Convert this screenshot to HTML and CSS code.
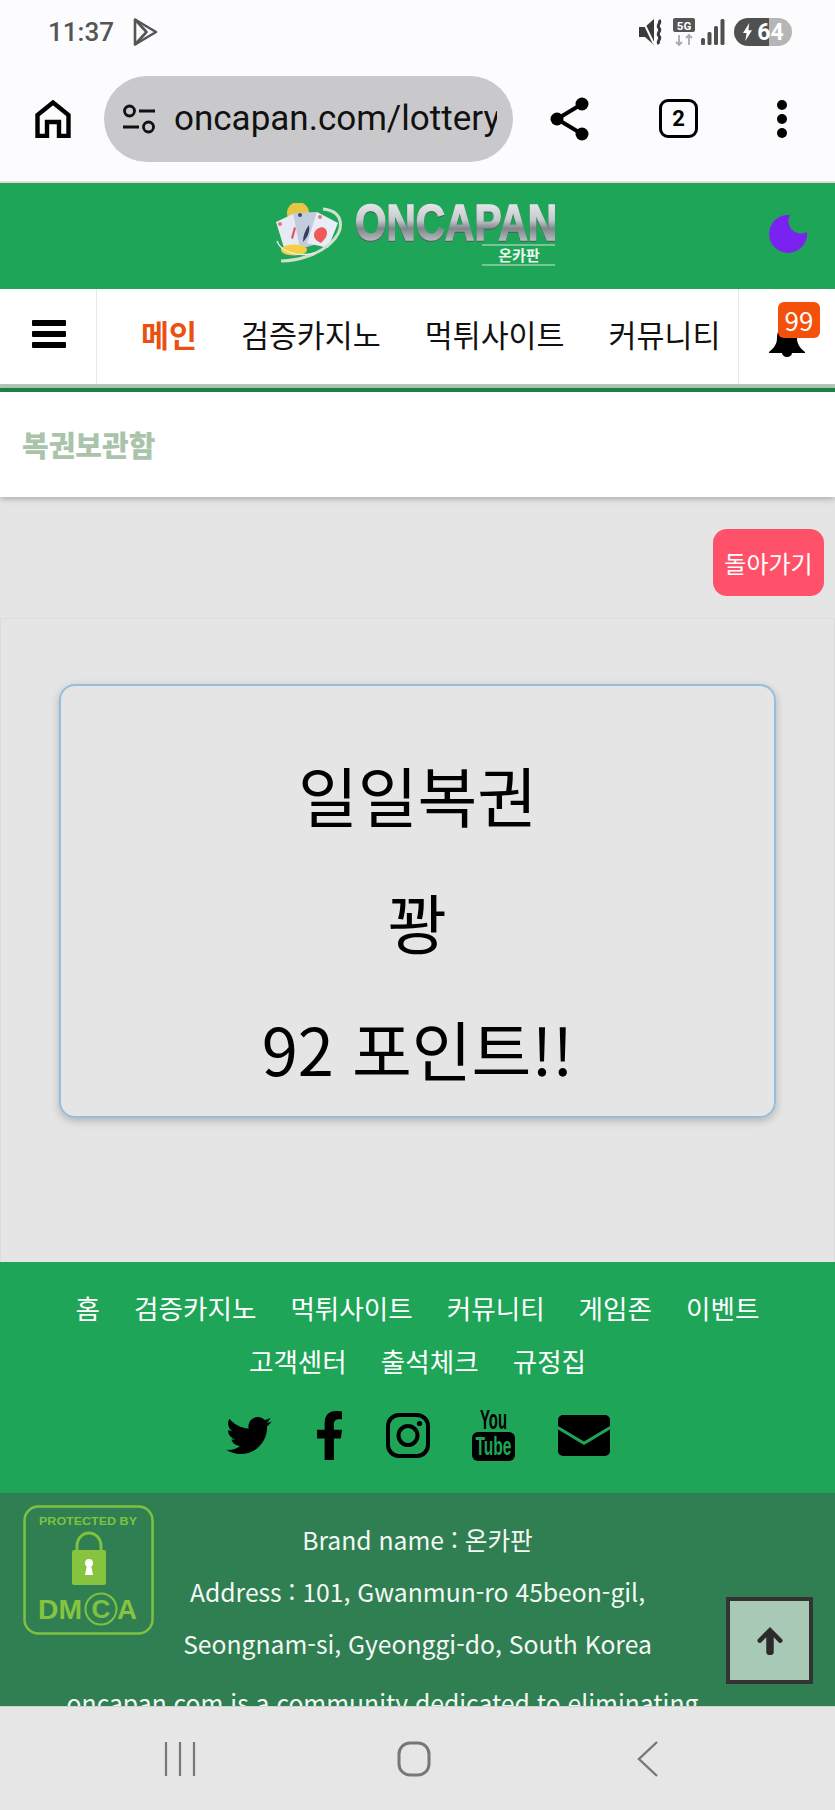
FILE: index.html
```html
<!DOCTYPE html>
<html lang="ko">
<head>
    <meta charset="UTF-8">
    <meta name="viewport" content="width=device-width, initial-scale=1.0">
    <title>복권보관함 - ONCAPAN</title>
    <link rel="stylesheet" href="styles.css">
</head>
<body>
    <div class="status-bar">
        <div class="status-left">
            <span class="status-time">11:37</span>
            <svg class="icon-play" viewBox="0 0 26 30" fill="none" stroke="#555" stroke-width="2.6" stroke-linejoin="round"><path d="M3 2.5 L24 15 L3 27.5 Z"/><path d="M3 2.5 L14.5 15 L3 27.5"/></svg>
        </div>
        <div class="status-right">
            <svg class="icon-mute" viewBox="0 0 26 30" fill="#3a3a3a"><path d="M0 10h6l9-8v26l-9-8H0z"/><path d="M3 2l12 25" stroke="#fcfcfe" stroke-width="2"/><path d="M20 3c3 3-3 5 0 8s-3 5 0 8-3 5 0 8" fill="none" stroke="#3a3a3a" stroke-width="3"/></svg>
            <svg class="icon-5g" viewBox="0 0 22 30"><rect x="0" y="1" width="22" height="14" rx="2" fill="#555"/><text x="11" y="12.5" class="icon-5g-text">5G</text><path d="M6 18v10M3 25l3 3 3-3M16 28V18M13 21l3-3 3 3" fill="none" stroke="#aaa" stroke-width="1.8"/></svg>
            <svg class="icon-signal" viewBox="0 0 24 28" fill="#505050"><rect x="0" y="20" width="4" height="7" rx="1.500"/><rect x="6.500" y="14" width="4" height="13" rx="1.500"/><rect x="13" y="8" width="4" height="19" rx="1.500"/><rect x="19.500" y="1" width="4" height="26" rx="1.500"/></svg>
            <div class="battery">
                <svg class="icon-bolt" viewBox="0 0 12 20" fill="#fff"><path d="M8 0 L1 11 h4 L3.5 20 L11 8 H7z"/></svg>
                <span>64</span>
            </div>
        </div>
    </div>

    <div class="browser-bar">
        <svg class="icon-home" viewBox="0 0 36 38" fill="none" stroke="#000" stroke-width="4.4" stroke-linejoin="miter"><path d="M2.500 36V15L18 2.500 33.500 15v21H24V22H12v14z"/></svg>
        <div class="url-pill">
            <svg class="icon-tune" viewBox="0 0 34 30" fill="none" stroke="#111" stroke-width="2.8"><circle cx="7.5" cy="7" r="5"/><path d="M17 7h16M1 23h16"/><circle cx="26.5" cy="23" r="5"/></svg>
            <span class="url-text">oncapan.com/lottery</span>
        </div>
        <svg class="icon-share" viewBox="0 0 40 44" fill="#000"><circle cx="32" cy="7" r="6.5"/><circle cx="7" cy="22" r="6.5"/><circle cx="32" cy="37" r="6.5"/><path d="M32 7L7 22l25 15" fill="none" stroke="#000" stroke-width="4"/></svg>
        <div class="tab-count">2</div>
        <div class="menu-dots"><i></i><i></i><i></i></div>
    </div>

    <div class="viewport">
        <header class="site-header">
            <svg class="logo" viewBox="0 0 285 65">
                <defs>
                    <linearGradient id="chrome" x1="0" y1="0" x2="0" y2="1">
                        <stop offset="0" stop-color="#f4f6f6"/>
                        <stop offset="0.45" stop-color="#c4c9cd"/>
                        <stop offset="0.6" stop-color="#7f878d"/>
                        <stop offset="1" stop-color="#e4e7e8"/>
                    </linearGradient>
                </defs>
                <circle cx="23" cy="10" r="11" fill="#e8c545"/>
                <path d="M1 19L20 10l8 35-18 3z" fill="#e6eaf4"/>
                <path d="M18 10l24-1 0 32-17 5z" fill="#c3cbdd"/>
                <path d="M42 9l21 11-10 25-21-5z" fill="#e9edf7"/>
                <circle cx="5" cy="21" r="2" fill="#e2777f"/>
                <circle cx="25" cy="12" r="2" fill="#3b4a6b"/>
                <circle cx="45" cy="14" r="2" fill="#e2777f"/>
                <path d="M19 24l2 1-3 11-2-1z" fill="#e0565c"/>
                <path d="M34 22c1 6-1 12-6 17 0-6 2-12 6-17z" fill="#2f3f5f"/>
                <path d="M44 25c3-2 8 0 8 5 0 4-3 7-6 10-4-2-7-4-7-8 0-4 3-6 5-7z" fill="#ee5a5a"/>
                <ellipse cx="19" cy="47" rx="13" ry="5.500" fill="#f5cf3f"/>
                <path d="M48 6C68 8 71 25 56 40 45 50 25 58 6 58" fill="none" stroke="#cfe0cc" stroke-width="3"/>
                <path d="M2 38C6 50 25 54 40 50" fill="none" stroke="#e3ece0" stroke-width="1.500"/>
                <text class="logo-main" x="80" y="37" textLength="202" lengthAdjust="spacingAndGlyphs" fill="url(#chrome)" stroke="url(#chrome)">ONCAPAN</text>
                <path d="M207 42h73M207 62h73" stroke="#cfe6d5" stroke-width="1"/>
                <text class="logo-sub" x="244" y="58">온카판</text>
            </svg>
            <svg class="icon-moon" viewBox="0 0 39 39"><path d="M21 1A19 19 0 1 0 38 18 12.500 12.500 0 0 1 21 1z" fill="#7a22f0"/></svg>
        </header>

        <nav class="main-nav">
            <div class="nav-burger"><i></i><i></i><i></i></div>
            <ul class="nav-list">
                <li class="active">메인</li>
                <li>검증카지노</li>
                <li>먹튀사이트</li>
                <li>커뮤니티</li>
            </ul>
            <div class="nav-bell">
                <svg class="icon-bell" viewBox="0 0 38 32" fill="#000"><path d="M19 1c-7 0-10 5-10 12 0 6-3 10-8 14v1h36v-1c-5-4-8-8-8-14 0-7-3-12-10-12z"/><path d="M14 28a5 4 0 0 0 10 0z"/></svg>
                <span class="bell-badge">99</span>
            </div>
        </nav>

        <div class="page-title">복권보관함</div>

        <div class="back-row">
            <button type="button" class="back-btn">돌아가기</button>
        </div>

        <main class="lottery-panel">
            <div class="lottery-card">
                <p>일일복권</p>
                <p>꽝</p>
                <p>92 포인트!!</p>
            </div>
        </main>

        <footer class="footer-links">
            <ul class="link-list">
                <li>홈</li>
                <li>검증카지노</li>
                <li>먹튀사이트</li>
                <li>커뮤니티</li>
                <li>게임존</li>
                <li>이벤트</li>
                <li>고객센터</li>
                <li>출석체크</li>
                <li>규정집</li>
            </ul>
            <div class="social">
                <svg class="s-twitter" viewBox="0 0 512 416"><path transform="translate(0 -48)" d="M459.37 151.716c.325 4.548.325 9.097.325 13.645 0 138.72-105.583 298.558-298.558 298.558-59.452 0-114.68-17.219-161.137-47.106 8.447.974 16.568 1.299 25.34 1.299 49.055 0 94.213-16.568 130.274-44.832-46.132-.975-84.792-31.188-98.112-72.772 6.498.974 12.995 1.624 19.818 1.624 9.421 0 18.843-1.3 27.614-3.573-48.081-9.747-84.143-51.98-84.143-102.985v-1.299c13.969 7.797 30.214 12.67 47.431 13.319-28.264-18.843-46.781-51.005-46.781-87.391 0-19.492 5.197-37.36 14.294-52.954 51.655 63.675 129.3 105.258 216.365 109.807-1.624-7.797-2.599-15.918-2.599-24.04 0-57.828 46.782-104.934 104.934-104.934 30.213 0 57.502 12.67 76.67 33.137 23.715-4.548 46.456-13.32 66.599-25.34-7.798 24.366-24.366 44.833-46.132 57.827 21.117-2.273 41.584-8.122 60.426-16.243-14.292 20.791-32.161 39.308-52.628 54.253z"/></svg>
                <svg class="s-facebook" viewBox="22 0 270 512" preserveAspectRatio="none"><path d="M279.14 288l14.22-92.66h-88.91v-60.13c0-25.35 12.42-50.06 52.24-50.06h40.42V6.26S260.43 0 225.36 0c-73.22 0-121.08 44.38-121.08 124.72v70.62H22.89V288h81.39v224h100.17V288z"/></svg>
                <svg class="s-instagram" viewBox="0 0 44 45" fill="none" stroke="#000" stroke-width="4"><rect x="2" y="2" width="40" height="41" rx="11"/><circle cx="22" cy="22.5" r="9.5"/><circle cx="33.5" cy="10.5" r="2.6" fill="#000" stroke="none"/></svg>
                <svg class="s-youtube" viewBox="0 0 43 52"><text class="yt-you" x="21.5" y="20" textLength="27" lengthAdjust="spacingAndGlyphs">You</text><rect x="0" y="23" width="43" height="29" rx="6"/><text class="yt-tube" x="21.5" y="46" textLength="36" lengthAdjust="spacingAndGlyphs">Tube</text></svg>
                <svg class="s-mail" viewBox="0 0 52 41"><path d="M5 0h42a5 5 0 0 1 5 5v6L26 26.500 0 11V5a5 5 0 0 1 5-5z"/><path d="M0 14.500L26 30l26-15.500V36a5 5 0 0 1-5 5H5a5 5 0 0 1-5-5z"/></svg>
            </div>
        </footer>

        <section class="footer-info">
            <svg class="dmca" viewBox="0 0 131 130">
                <rect x="1.500" y="1.500" width="128" height="127" rx="14" fill="none" stroke="#7fc241" stroke-width="2.500"/>
                <text class="dmca-top" x="65" y="20" textLength="98" lengthAdjust="spacingAndGlyphs">PROTECTED BY</text>
                <path d="M54 45v-4a12 13 0 0 1 24 0v4" fill="none" stroke="#7fc241" stroke-width="3"/>
                <rect x="49" y="45" width="34" height="35" rx="2" fill="#86c440"/>
                <circle cx="66" cy="58" r="4" fill="#fff"/>
                <path d="M64 60h4l2 10h-8z" fill="#fff"/>
                <text class="dmca-main" x="15" y="114" textLength="44" lengthAdjust="spacingAndGlyphs">DM</text>
                <circle cx="78" cy="104" r="15.500" fill="none" stroke="#7fc241" stroke-width="2"/>
                <text class="dmca-c" x="78" y="113">C</text>
                <text class="dmca-main" x="94" y="114" textLength="20" lengthAdjust="spacingAndGlyphs">A</text>
            </svg>
            <p>Brand name : 온카판</p>
            <p>Address : 101, Gwanmun-ro 45beon-gil,<br>Seongnam-si, Gyeonggi-do, South Korea</p>
            <p class="info-about">oncapan.com is a community dedicated to eliminating</p>
        </section>

        <button type="button" class="to-top" aria-label="맨 위로">
            <svg viewBox="0 0 28 30" fill="#2b2b2b"><path d="M14 0L27 13a2.500 2.500 0 0 1-3.500 3.500L18 11v16a4 3 0 0 1-8 0V11l-5.500 5.500A2.500 2.500 0 0 1 1 13z"/></svg>
        </button>
    </div>

    <div class="system-nav">
        <svg class="nav-recents" viewBox="0 0 32 36" fill="none" stroke="#777" stroke-width="2.200"><path d="M2 1v34M16 1v34M30 1v34"/></svg>
        <svg class="nav-home" viewBox="0 0 34 36" fill="none" stroke="#777" stroke-width="3"><rect x="2" y="2" width="30" height="32" rx="11"/></svg>
        <svg class="nav-back" viewBox="0 0 22 36" fill="none" stroke="#777" stroke-width="2.400"><path d="M20 1L2 18l18 17"/></svg>
    </div>
</body>
</html>
```

FILE: styles.css
```css
* {
    margin: 0;
    padding: 0;
    box-sizing: border-box;
}

html, body {
    height: 100%;
    overflow: hidden;
}

body {
    display: flex;
    flex-direction: column;
    font-family: "Noto Sans CJK KR", "Noto Sans", sans-serif;
    background: #e5e5e5;
    color: #000;
}

svg {
    display: block;
    flex: none;
}

ul {
    list-style: none;
}


/* phone status bar */
.status-bar {
    height: 64px;
    flex: none;
    padding: 0 43px 0 48px;
    background: #fcfcfe;
    display: flex;
    justify-content: space-between;
    align-items: center;
}

.status-left,
.status-right {
    display: flex;
    align-items: center;
}

.status-time {
    font-family: Roboto, sans-serif;
    font-size: 26px;
    font-weight: 500;
    color: #555;
}

.icon-play {
    width: 26px;
    height: 30px;
    margin-left: 18px;
}

.icon-mute {
    width: 26px;
    height: 30px;
}

.icon-5g {
    width: 22px;
    height: 30px;
    margin-left: 8px;
}

.icon-5g-text {
    font-family: Roboto, sans-serif;
    font-size: 11.500px;
    font-weight: 700;
    fill: #fff;
    text-anchor: middle;
}

.icon-signal {
    width: 24px;
    height: 28px;
    margin-left: 6px;
}

.battery {
    width: 58px;
    height: 28px;
    margin-left: 9px;
    border-radius: 14px;
    background: linear-gradient(90deg, #505050 0, #505050 61%, #b5b5b5 61%);
    display: flex;
    align-items: center;
    justify-content: center;
    gap: 4px;
    color: #fff;
    font-family: Roboto, sans-serif;
    font-size: 23px;
    font-weight: 700;
}

.icon-bolt {
    width: 11px;
    height: 18px;
}


/* browser toolbar */
.browser-bar {
    height: 119px;
    flex: none;
    background: #fcfcfe;
    border-bottom: 2px solid #dcdcdc;
    display: flex;
    align-items: center;
    padding-bottom: 8px;
}

.icon-home {
    width: 36px;
    height: 38px;
    margin-left: 35px;
}

.url-pill {
    width: 409px;
    height: 86px;
    margin-left: 33px;
    padding: 0 16px 0 18px;
    border-radius: 43px;
    background: #c9c9cb;
    display: flex;
    align-items: center;
    gap: 18px;
}

.icon-tune {
    width: 34px;
    height: 30px;
}

.url-text {
    flex: 1;
    min-width: 0;
    overflow: hidden;
    font-family: Roboto, sans-serif;
    font-size: 35px;
    color: #111;
    white-space: nowrap;
}

.icon-share {
    width: 40px;
    height: 44px;
    margin-left: 37px;
}

.tab-count {
    width: 39px;
    height: 39px;
    margin-left: 69px;
    border: 3.5px solid #000;
    border-radius: 9px;
    font-family: Roboto, sans-serif;
    font-size: 22px;
    font-weight: 700;
    display: flex;
    align-items: center;
    justify-content: center;
}

.menu-dots {
    margin-left: 79px;
    display: flex;
    flex-direction: column;
    gap: 4px;
}

.menu-dots i {
    width: 10px;
    height: 10px;
    border-radius: 50%;
    background: #000;
}


/* page inside the browser */
.viewport {
    flex: 1;
    min-height: 0;
    overflow: hidden;
    position: relative;
    background: #e5e5e5;
}

.site-header {
    height: 106px;
    background: #1fa558;
    display: flex;
    align-items: flex-start;
    padding: 20px 27px 0 275px;
    justify-content: space-between;
}

.logo {
    width: 285px;
    height: 65px;
}

.logo-main {
    font-family: "Liberation Sans", sans-serif;
    font-size: 50px;
    font-weight: 700;
    stroke-width: 1.6px;
    filter: drop-shadow(0 1px 0 #4d5a55);
}

.logo-sub {
    font-family: "Noto Sans CJK KR", sans-serif;
    font-size: 15px;
    font-weight: 700;
    fill: #eaf5ea;
    text-anchor: middle;
}

.icon-moon {
    width: 39px;
    height: 39px;
    margin-top: 11px;
}

.main-nav {
    height: 99px;
    background: #fff;
    border-bottom: 4px solid #b4c8bb;
    display: flex;
    align-items: stretch;
}

.nav-burger {
    width: 97px;
    border-right: 1px solid #e8e8e8;
    display: flex;
    flex-direction: column;
    justify-content: center;
    gap: 5px;
    padding: 0 30px 6px 32px;
}

.nav-burger i {
    height: 6px;
    border-radius: 1px;
    background: #000;
}

.nav-list {
    flex: 1;
    display: flex;
    align-items: center;
    gap: 44px;
    padding: 0 0 6px 44px;
    font-size: 30.400px;
    white-space: nowrap;
    color: #111;
}

.nav-list .active {
    color: #ea5010;
    font-weight: 700;
}

.nav-bell {
    width: 97px;
    border-left: 1px solid #e8e8e8;
    position: relative;
}

.icon-bell {
    width: 38px;
    height: 32px;
    position: absolute;
    left: 29px;
    top: 36px;
}

.bell-badge {
    position: absolute;
    left: 39px;
    top: 13px;
    width: 42px;
    height: 36px;
    border-radius: 6px;
    background: #f4500a;
    color: #fff;
    font-size: 26px;
    line-height: 35px;
    text-align: center;
}

.page-title {
    height: 109px;
    border-top: 4px solid #1c7f45;
    background: #fff;
    box-shadow: 0 2px 6px rgba(0, 0, 0, 0.25);
    padding: 0 0 1px 22px;
    display: flex;
    align-items: center;
    font-size: 29px;
    font-weight: 900;
    color: #a9c4aa;
    position: relative;
}

.back-row {
    display: flex;
    justify-content: flex-end;
    padding: 32px 11px 22px 0;
}

.back-btn {
    width: 111px;
    height: 67px;
    border: none;
    border-radius: 14px;
    background: #ff5169;
    color: #fff;
    font-family: inherit;
    font-size: 24px;
}

.lottery-panel {
    height: 644px;
    border: 1px solid #dcdcdc;
    border-bottom: none;
    padding: 65px 58px 0;
}

.lottery-card {
    height: 434px;
    border: 2px solid #93bfdc;
    border-radius: 16px;
    box-shadow: 0 3px 8px rgba(0, 0, 0, 0.22);
    display: flex;
    flex-direction: column;
    align-items: center;
    padding-top: 62px;
    gap: 34px;
    font-size: 65px;
    line-height: 93px;
    color: #000;
}

.footer-links {
    height: 231px;
    background: #1fa558;
    padding-top: 19px;
    color: #fff;
}

.link-list {
    display: flex;
    flex-wrap: wrap;
    justify-content: center;
    column-gap: 34px;
    padding: 0 40px;
    font-size: 26.600px;
    line-height: 53px;
}

.social {
    margin-top: 22px;
    display: flex;
    justify-content: center;
    align-items: center;
}

.s-twitter {
    width: 46px;
    height: 37px;
}

.s-facebook {
    width: 25px;
    height: 49px;
    margin-left: 45px;
}

.s-instagram {
    width: 44px;
    height: 45px;
    margin-left: 44px;
}

.s-youtube {
    width: 43px;
    height: 52px;
    margin-left: 42px;
}

.s-mail {
    width: 52px;
    height: 41px;
    margin-left: 43px;
}

.yt-you,
.yt-tube {
    font-family: "Liberation Sans Narrow", "Liberation Sans", sans-serif;
    font-weight: 700;
    text-anchor: middle;
}

.yt-you {
    font-size: 27px;
    fill: #000;
}

.yt-tube {
    font-size: 25px;
    fill: #1fa558;
}

.footer-info {
    height: 400px;
    background: #2f7f52;
    position: relative;
    padding-top: 20px;
    text-align: center;
    color: #f4f8f4;
    font-size: 24.700px;
    line-height: 52px;
}

.footer-info .info-about {
    margin-top: 7px;
    padding-right: 70px;
    white-space: nowrap;
}

.dmca {
    position: absolute;
    left: 23px;
    top: 12px;
    width: 131px;
    height: 130px;
}

.dmca-top {
    font-family: "Liberation Sans", sans-serif;
    font-size: 10px;
    font-weight: 700;
    fill: #7fc241;
    text-anchor: middle;
}

.dmca-main {
    font-family: "Liberation Sans", sans-serif;
    font-size: 28px;
    font-weight: 700;
    fill: #86c440;
}

.dmca-c {
    font-family: "Liberation Sans", sans-serif;
    font-size: 26px;
    font-weight: 700;
    fill: #7fc241;
    text-anchor: middle;
}

.to-top {
    position: absolute;
    right: 22px;
    bottom: 22px;
    width: 87px;
    height: 87px;
    border: 4px solid #333;
    background: #a9c9b7;
    display: flex;
    align-items: center;
    justify-content: center;
}

.to-top svg {
    width: 28px;
    height: 28px;
}


/* android navigation bar */
.system-nav {
    height: 104px;
    flex: none;
    background: #e6e6e6;
    border-top: 1px solid #c8d4cc;
    display: grid;
    grid-template-columns: 360px 220px 1fr;
    align-items: center;
}

.nav-recents {
    width: 32px;
    height: 36px;
    margin-left: 164px;
}

.nav-home {
    width: 34px;
    height: 36px;
    margin-left: 37px;
}

.nav-back {
    width: 22px;
    height: 36px;
    margin-left: 57px;
}
```
